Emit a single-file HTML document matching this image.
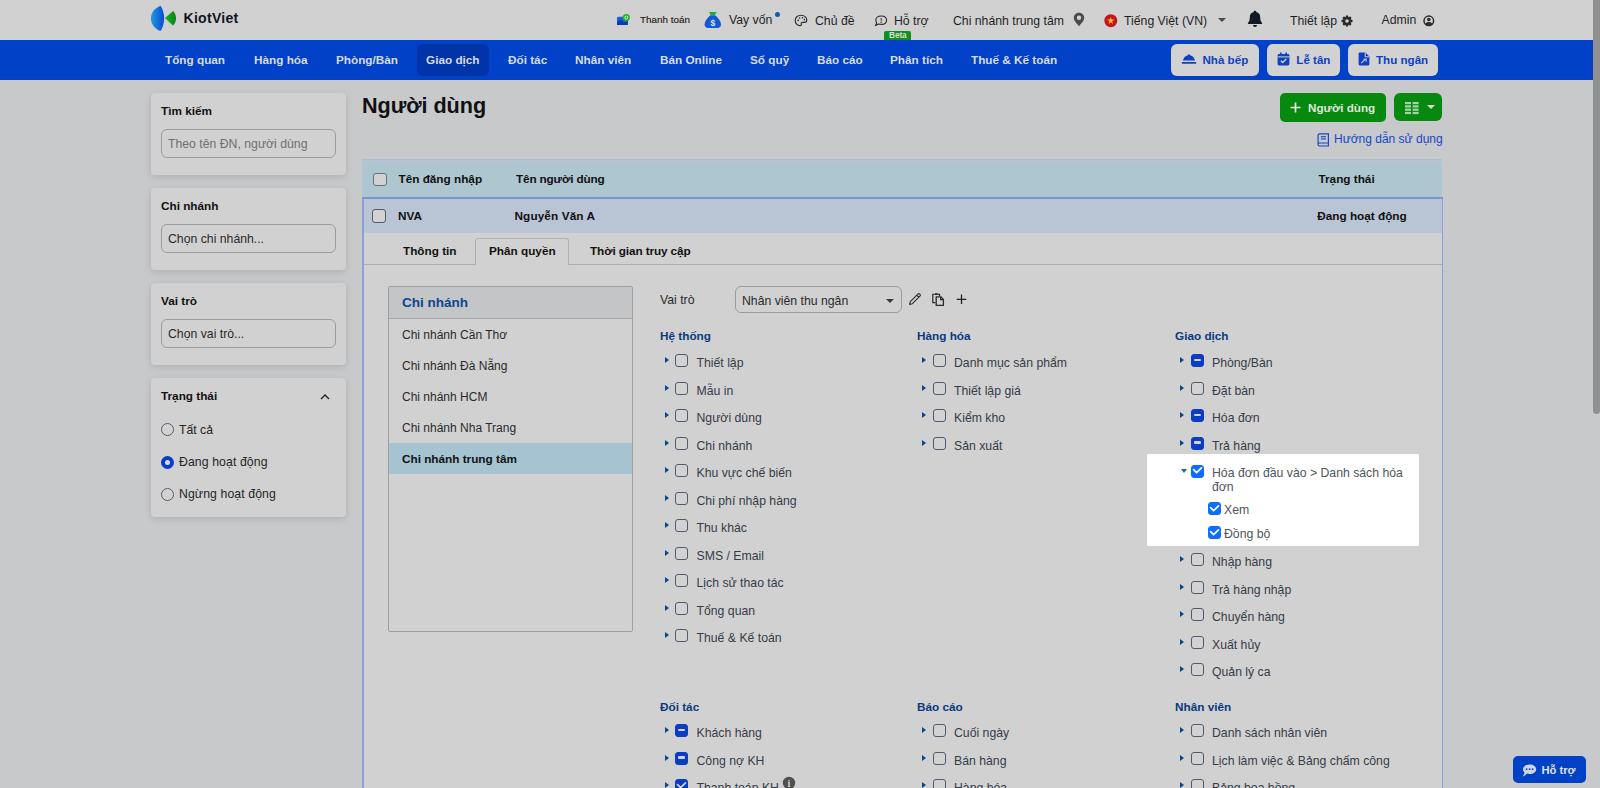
<!DOCTYPE html>
<html lang="vi">
<head>
<meta charset="utf-8">
<title>Người dùng - KiotViet</title>
<style>
*{box-sizing:border-box;margin:0;padding:0}
html,body{width:1600px;height:788px;overflow:hidden}
body{position:relative;background:#c8c9cb;font-family:"Liberation Sans",sans-serif;font-size:12.25px;color:#1c1c1c}
#page{position:absolute;left:0;top:0;width:1600px;height:788px;overflow:hidden}
#page div,#page span,#page i,#page svg,#page b{position:absolute;white-space:nowrap}
#topbar{left:0;top:0;width:1593px;height:40px;background:#d1d1d1}
#nav{left:0;top:40px;width:1593px;height:40px;background:#0041c8}
.nv{color:#d8dbe4;font-weight:bold;font-size:11.75px;top:12px;line-height:16px}
.tb{color:#1f1f1f;font-size:12.25px;top:13px;line-height:16px}
.nbtn{top:4px;height:32px;background:#d2d2d3;border-radius:6px}
.nbtn span{color:#0f3fc2;font-size:11.6px;font-weight:bold;top:8px;line-height:16px}
.card{left:151px;width:195px;background:#d1d1d1;border-radius:4px;box-shadow:0 2px 7px rgba(0,0,0,.13)}
.card .h{left:10px;top:10px;font-weight:bold;font-size:11.75px;line-height:16px;color:#111}
.card .in{left:10px;top:36px;width:175px;height:29px;border:1px solid #9c9c9c;border-radius:6px;background:#d1d1d1}
.card .in span{left:6px;top:6px;font-size:12.25px;line-height:16px;color:#2a2a2a}
.rad{width:13.4px;height:13.4px;border:1.25px solid #565d6b;border-radius:50%;background:#d2d2d2}
.rl{font-size:12.25px;line-height:16px;color:#262626}
.sec{font-weight:bold;font-size:11.75px;line-height:16px;color:#0a3a80}
.row{height:16px;width:250px}
.row .ar{left:4.5px;top:3.3px;width:0;height:0;border-left:4.5px solid #0a4688;border-top:3.7px solid transparent;border-bottom:3.7px solid transparent}
.row .cb,.cbx{left:16px;top:.3px;width:13px;height:13.2px;border:1.3px solid #4f5a6e;border-radius:3px;background:#d2d2d2}
.row .cb.on,.row .cb.chk{background:#0a3cc4;border-color:#0a3cc4}
.row .cb.on:after{content:"";position:absolute;left:1.7px;top:3.7px;width:7px;height:2.2px;background:#d2d2d2;border-radius:1px}
.row span{left:37px;top:1px;font-size:12.25px;line-height:16px;color:#353c48}
.th{font-weight:bold;font-size:11.75px;line-height:16px;color:#111}
.bi{left:13px;font-size:12px;line-height:16px;color:#2a2a2a}
.ck{background:#0d6efd !important;border-color:#0d6efd !important}
</style>
</head>
<body>
<div id="page">
<div id="topbar">
<svg style="left:150px;top:5px" width="28" height="27" viewBox="0 0 28 27"><defs><linearGradient id="lg" x1="0" x2="1" y1="0" y2="0"><stop offset="0" stop-color="#1f9fd6"/><stop offset="1" stop-color="#0a48d6"/></linearGradient><linearGradient id="gg" x1="0" x2="1" y1="0" y2="0"><stop offset="0" stop-color="#1bb224"/><stop offset="1" stop-color="#0a8613"/></linearGradient></defs><path d="M10.7 0.8 C4.5 3 0.9 8 0.9 13.4 C0.9 18.8 4.5 23.8 10.7 26 C13 22 14.1 17.8 14.1 13.4 C14.1 9 13 4.8 10.7 0.8Z" fill="url(#lg)"/><path d="M14.9 13.1 L23.2 5.9 C25.2 8 26 10.5 26 13.3 C26 16 25.2 18.5 22.9 20.6 Z" fill="url(#gg)"/></svg>
<span style="left:183.5px;top:9px;font-size:14px;line-height:18px;font-weight:bold;color:#111622;letter-spacing:0.3px">KiotViet</span>
<svg style="left:616px;top:12px" width="15" height="14" viewBox="0 0 15 14"><rect x="1" y="4.8" width="10.8" height="8.2" rx="1.2" fill="#1a60dc"/><path d="M1 10 L5 7.5 L8 10.5 L11.8 9 L11.8 13 L1 13Z" fill="#0a3cb0"/><circle cx="10.3" cy="5.6" r="3.6" fill="#22b02a"/><circle cx="10.3" cy="5.6" r="1.5" fill="none" stroke="#d8f0d8" stroke-width="1"/></svg>
<span class="tb" style="left:640px;font-size:9.9px;top:12px;color:#1f1212;-webkit-text-stroke:.12px #2a1616">Thanh toán</span>
<svg style="left:704px;top:11px" width="18" height="18" viewBox="0 0 18 18"><path d="M5 1 L12.6 1 L11 4 L6.6 4Z" fill="#1fae27"/><path d="M6.4 4.3 L11.2 4.3 C14.5 7 17 10.5 17 13.6 C17 16 15.6 17 13.4 17 L4.2 17 C2 17 0.6 16 0.6 13.6 C0.6 10.5 3.1 7 6.4 4.3Z" fill="#1257d6"/><text x="8.8" y="14.6" font-size="8.5" font-weight="bold" fill="#dfe6f5" text-anchor="middle" font-family="Liberation Sans, sans-serif">$</text></svg>
<span class="tb" style="left:729px;top:12px">Vay vốn</span>
<i style="left:775px;top:11.7px;width:5px;height:5px;border-radius:50%;background:#0b5cb5"></i>
<svg style="left:794px;top:14px" width="14" height="13" viewBox="0 0 14 13"><path d="M7 1.2 C3.6 1.2 1.2 3.6 1.2 6.5 C1.2 9.4 3.4 11.6 6 11.6 C7.3 11.6 7.6 10.8 7.3 10 C7 9.1 7.5 8.3 8.6 8.3 L10.4 8.3 C11.9 8.3 12.8 7.4 12.8 6 C12.8 3.3 10.3 1.2 7 1.2Z" fill="none" stroke="#2b2b2b" stroke-width="1.15"/><circle cx="4.2" cy="6.4" r=".8" fill="#2b2b2b"/><circle cx="5.6" cy="4" r=".8" fill="#2b2b2b"/><circle cx="8.4" cy="3.8" r=".8" fill="#2b2b2b"/><circle cx="10.4" cy="5.6" r=".8" fill="#2b2b2b"/></svg>
<span class="tb" style="left:815px">Chủ đề</span>
<svg style="left:874px;top:15px" width="14" height="12" viewBox="0 0 14 12"><path d="M7.2 1 C10.4 1 12.6 2.8 12.6 5.2 C12.6 7.6 10.4 9.4 7.2 9.4 C6.3 9.4 5.5 9.3 4.8 9 L1.4 10.6 L2.7 7.9 C2.1 7.1 1.8 6.2 1.8 5.2 C1.8 2.8 4 1 7.2 1Z" fill="none" stroke="#2b2b2b" stroke-width="1.1" stroke-linejoin="round"/><text x="7.25" y="8" font-size="7" font-weight="bold" fill="#2b2b2b" text-anchor="middle" font-family="Liberation Sans, sans-serif">!</text></svg>
<span class="tb" style="left:894px">Hỗ trợ</span>
<div style="left:884px;top:31px;width:27px;height:9px;background:#10901a;border-radius:2px 2px 0 0"><span style="left:5px;top:0;font-size:8.3px;line-height:9px;font-weight:bold;color:#dcdcdc;letter-spacing:-0.1px">Beta</span></div>
<span class="tb" style="left:953px">Chi nhánh trung tâm</span>
<svg style="left:1073px;top:12px" width="12" height="15" viewBox="0 0 12 15"><path d="M6 .7 C3 .7 .8 2.9 .8 5.8 C.8 9 4 12 6 14.2 C8 12 11.2 9 11.2 5.8 C11.2 2.9 9 .7 6 .7Z M6 3.6 A2.2 2.2 0 1 1 6 8 A2.2 2.2 0 1 1 6 3.6Z" fill="#4b4b4b" fill-rule="evenodd"/></svg>
<svg style="left:1104px;top:14px" width="14" height="14" viewBox="0 0 14 14"><circle cx="6.8" cy="6.7" r="6.5" fill="#c4161c"/><path d="M6.8 3 L7.7 5.6 L10.4 5.6 L8.2 7.2 L9 9.9 L6.8 8.3 L4.6 9.9 L5.4 7.2 L3.2 5.6 L5.9 5.6Z" fill="#e6c11e"/></svg>
<span class="tb" style="left:1124px">Tiếng Việt (VN)</span>
<i style="left:1217.5px;top:17.8px;border-top:4.4px solid #4a4a4a;border-left:4.2px solid transparent;border-right:4.2px solid transparent"></i>
<svg style="left:1247px;top:10px" width="16" height="18" viewBox="0 0 16 18"><path d="M8 .8 C8.8 .8 9.3 1.3 9.3 2 C11.8 2.6 13.2 4.6 13.2 7.2 C13.2 10 13.8 11.6 15 12.8 C15.4 13.3 15.1 14 14.4 14 L1.6 14 C.9 14 .6 13.3 1 12.8 C2.2 11.6 2.8 10 2.8 7.2 C2.8 4.6 4.2 2.6 6.7 2 C6.7 1.3 7.2 .8 8 .8Z" fill="#111a22"/><path d="M6 15 L10 15 C10 16.2 9.1 17 8 17 C6.9 17 6 16.2 6 15Z" fill="#111a22"/></svg>
<span class="tb" style="left:1290px">Thiết lập</span>
<svg style="left:1341px;top:15px" width="12" height="12" viewBox="0 0 12 12"><g fill="#2b2b2b"><circle cx="6" cy="6" r="4.2"/><rect x="4.8" y="0.6" width="2.4" height="10.8" rx=".4"/><rect x="4.8" y="0.6" width="2.4" height="10.8" rx=".4" transform="rotate(45 6 6)"/><rect x="4.8" y="0.6" width="2.4" height="10.8" rx=".4" transform="rotate(90 6 6)"/><rect x="4.8" y="0.6" width="2.4" height="10.8" rx=".4" transform="rotate(135 6 6)"/></g><circle cx="6" cy="6" r="1.8" fill="#d1d1d1"/></svg>
<span class="tb" style="left:1381.5px;top:12px">Admin</span>
<svg style="left:1423px;top:14.5px" width="12" height="12" viewBox="0 0 12 12"><circle cx="5.8" cy="5.8" r="4.8" fill="#d1d1d1" stroke="#2b2b2b" stroke-width="1.5"/><circle cx="5.8" cy="4.5" r="1.8" fill="#2b2b2b"/><path d="M2.3 8.9 C3 7.4 4.3 6.9 5.8 6.9 C7.3 6.9 8.6 7.4 9.3 8.9 C8.4 10 7.2 10.6 5.8 10.6 C4.4 10.6 3.2 10 2.3 8.9Z" fill="#2b2b2b"/></svg>
</div>
<div id="nav">
<div style="left:417px;top:4px;width:72px;height:32px;border-radius:6px;background:#0034a8"></div>
<span class="nv" style="left:165px">Tổng quan</span>
<span class="nv" style="left:254px">Hàng hóa</span>
<span class="nv" style="left:336px">Phòng/Bàn</span>
<span class="nv" style="left:426px">Giao dịch</span>
<span class="nv" style="left:508px">Đối tác</span>
<span class="nv" style="left:575px">Nhân viên</span>
<span class="nv" style="left:660px">Bán Online</span>
<span class="nv" style="left:750px">Sổ quỹ</span>
<span class="nv" style="left:817px">Báo cáo</span>
<span class="nv" style="left:890px">Phân tích</span>
<span class="nv" style="left:971px">Thuế &amp; Kế toán</span>
<div class="nbtn" style="left:1171px;width:88px"><svg style="left:10px;top:9px" width="16" height="12" viewBox="0 0 16 12"><path d="M8 1.2 C8.6 1.2 9 1.6 9 2.2 C11.8 2.7 13.6 4.8 14 7.6 L2 7.6 C2.4 4.8 4.2 2.7 7 2.2 C7 1.6 7.4 1.2 8 1.2Z" fill="#0f3fc2"/><rect x="0.8" y="9" width="14.4" height="1.8" rx=".5" fill="#0f3fc2"/></svg><span style="left:31.5px">Nhà bếp</span></div>
<div class="nbtn" style="left:1267px;width:73px"><svg style="left:10px;top:8px" width="13" height="14" viewBox="0 0 13 14"><path d="M3 .6 L4.6 .6 L4.6 2 L8.4 2 L8.4 .6 L10 .6 L10 2 L11 2 C11.8 2 12.4 2.6 12.4 3.4 L12.4 12 C12.4 12.8 11.8 13.4 11 13.4 L2 13.4 C1.2 13.4 .6 12.8 .6 12 L.6 3.4 C.6 2.6 1.2 2 2 2 L3 2Z" fill="#0f3fc2"/><rect x=".6" y="4.4" width="11.8" height="1" fill="#d2d2d3"/><path d="M3.8 8.8 L5.7 10.6 L9.3 7" fill="none" stroke="#d2d2d3" stroke-width="1.4"/></svg><span style="left:29.3px">Lễ tân</span></div>
<div class="nbtn" style="left:1348px;width:90px"><svg style="left:10px;top:8px" width="12" height="14" viewBox="0 0 12 14"><path d="M1.8 .6 L7.4 .6 L11.4 4.6 L11.4 12.2 C11.4 12.9 10.9 13.4 10.2 13.4 L1.8 13.4 C1.1 13.4 .6 12.9 .6 12.2 L.6 1.8 C.6 1.1 1.1 .6 1.8 .6Z" fill="#0f3fc2"/><path d="M7.2 .8 L7.2 4.8 L11.2 4.8" fill="none" stroke="#d2d2d3" stroke-width="1"/><path d="M3.2 11.2 L6.8 7.6 M5.6 7.2 L8.2 7 L8 9.6" fill="none" stroke="#d2d2d3" stroke-width="1.1"/></svg><span style="left:28px">Thu ngân</span></div>
</div>
<div class="card" style="top:93px;height:82px"><span class="h">Tìm kiếm</span><div class="in"><span style="color:#6f6f6f">Theo tên ĐN, người dùng</span></div></div>
<div class="card" style="top:188px;height:82px"><span class="h">Chi nhánh</span><div class="in"><span>Chọn chi nhánh...</span></div></div>
<div class="card" style="top:283px;height:82px"><span class="h">Vai trò</span><div class="in"><span>Chọn vai trò...</span></div></div>
<div class="card" style="top:378px;height:139px"><span class="h">Trạng thái</span>
<svg style="left:169px;top:15px" width="10" height="8" viewBox="0 0 10 8"><path d="M1 6 L5 2 L9 6" fill="none" stroke="#222" stroke-width="1.4"/></svg>
<i class="rad" style="left:10px;top:45px"></i><span class="rl" style="left:28px;top:43.5px">Tất cả</span>
<i class="rad" style="left:10px;top:77.5px;border:4px solid #0a3cc6;background:#dcdcdc"></i><span class="rl" style="left:28px;top:76px;letter-spacing:.1px">Đang hoạt động</span>
<i class="rad" style="left:10px;top:110px"></i><span class="rl" style="left:28px;top:108px;letter-spacing:.1px">Ngừng hoạt động</span>
</div>
<span style="left:362px;top:92px;font-size:21.6px;line-height:28px;font-weight:bold;color:#111;letter-spacing:-0.05px">Người dùng</span>
<div style="left:1280px;top:92.5px;width:106px;height:29px;border-radius:5px;background:#07880f"><svg style="left:10px;top:9px" width="11" height="11" viewBox="0 0 11 11"><path d="M5.5 .4 L5.5 10.6 M.4 5.5 L10.6 5.5" stroke="#e4ece4" stroke-width="1.7"/></svg><span style="left:28px;top:7px;font-size:11.65px;line-height:16px;font-weight:bold;color:#dfe6df">Người dùng</span></div>
<div style="left:1394px;top:92.5px;width:48px;height:28.5px;border-radius:6px;background:#07880f"><svg style="left:11px;top:9px" width="14" height="13" viewBox="0 0 14 13"><g fill="#a8d2aa"><rect x="0" y="0" width="6" height="2.2"/><rect x="7.6" y="0" width="6" height="2.2"/><rect x="0" y="3.3" width="6" height="2.2"/><rect x="7.6" y="3.3" width="6" height="2.2"/><rect x="0" y="6.6" width="6" height="2.2"/><rect x="7.6" y="6.6" width="6" height="2.2"/><rect x="0" y="9.9" width="6" height="2.2"/><rect x="7.6" y="9.9" width="6" height="2.2"/></g></svg><i style="left:33px;top:12.5px;border-top:4.5px solid #cfe3cf;border-left:4.5px solid transparent;border-right:4.5px solid transparent"></i></div>
<svg style="left:1317px;top:132.5px" width="13" height="14" viewBox="0 0 13 14"><path d="M2.6 .8 L11.4 .8 L11.4 13 L2.6 13 C1.7 13 1.1 12.4 1.1 11.5 L1.1 2.3 C1.1 1.4 1.7 .8 2.6 .8Z M1.1 11.3 C1.1 10.5 1.7 10 2.6 10 L11.4 10" fill="none" stroke="#1546c8" stroke-width="1.2"/><rect x="3.8" y="3.2" width="5.2" height="1.1" fill="#1546c8"/><rect x="3.8" y="5.4" width="5.2" height="1.1" fill="#1546c8"/></svg>
<span style="left:1334px;top:131px;font-size:12px;line-height:16px;color:#1546c8">Hướng dẫn sử dụng</span>
<div style="left:362px;top:159px;width:1080px;height:38px;background:#aec6cf;border-top:1px solid #a6c1cc"><div style="left:0;top:0;width:1080px;height:3px;background:#b5c3d2"></div></div>
<i class="cbx" style="left:373px;top:172.5px;width:13.5px;height:13.5px;background:#d2d2d2;border-color:#66727f"></i>
<span class="th" style="left:398.5px;top:171px">Tên đăng nhập</span>
<span class="th" style="left:516px;top:171px;letter-spacing:-0.15px">Tên người dùng</span>
<span class="th" style="left:1318.5px;top:171px">Trạng thái</span>
<div style="left:362px;top:197px;width:1081px;height:620px;background:#d1d1d1"></div>
<div style="left:363px;top:198px;width:1079px;height:35px;background:#b9c4d4"></div>
<div style="left:362.4px;top:197px;width:1.2px;height:620px;background:#8f9edc"></div>
<div style="left:1441.5px;top:197px;width:1.2px;height:620px;background:#8f9edc"></div>
<div style="left:362.4px;top:197.2px;width:1080.3px;height:1.6px;background:#7895da"></div>
<i class="cbx" style="left:372.4px;top:209px;width:13.5px;height:13.6px;background:#d2d2d2"></i>
<span class="th" style="left:398px;top:208px">NVA</span>
<span class="th" style="left:514.5px;top:208px;letter-spacing:.12px">Nguyễn Văn A</span>
<span class="th" style="left:1317.3px;top:208px">Đang hoạt động</span>
<div style="left:363px;top:264px;width:1079px;height:1px;background:#aeaeae"></div>
<div style="left:475px;top:238px;width:94px;height:27px;background:#d1d1d1;border:1px solid #b0b0b0;border-bottom:none;border-radius:3px 3px 0 0"></div>
<span class="th" style="left:403px;top:243px">Thông tin</span>
<span class="th" style="left:489px;top:243px">Phân quyền</span>
<span class="th" style="left:590px;top:243px;letter-spacing:-0.1px">Thời gian truy cập</span>
<div style="left:388px;top:286px;width:245px;height:346px;border:1px solid #9f9f9f;border-radius:2px;background:#d1d1d1">
<div style="left:0;top:0;width:243px;height:32px;background:#c4c5c7;border-bottom:1px solid #a8a8a8"><span style="left:13px;top:7px;font-size:13.5px;line-height:18px;font-weight:bold;color:#0a4590">Chi nhánh</span></div>
<div style="left:0;top:156px;width:243px;height:31px;background:#a5c3d0"></div>
<span class="bi" style="top:40px">Chi nhánh Cần Thơ</span>
<span class="bi" style="top:71px">Chi nhánh Đà Nẵng</span>
<span class="bi" style="top:102px">Chi nhánh HCM</span>
<span class="bi" style="top:133px">Chi nhánh Nha Trang</span>
<span class="bi" style="top:164px;font-weight:bold;font-size:11.75px;color:#111">Chi nhánh trung tâm</span>
</div>
<span style="left:660px;top:292px;font-size:12.25px;line-height:16px;color:#2a2a2a">Vai trò</span>
<div style="left:735px;top:286px;width:167px;height:27px;border:1px solid #9c9c9c;border-radius:6px"><span style="left:6px;top:6px;font-size:12.25px;line-height:16px;color:#2a2a2a">Nhân viên thu ngân</span><i style="left:149.5px;top:12.3px;border-top:4.4px solid #3a3a3a;border-left:4px solid transparent;border-right:4px solid transparent"></i></div>
<svg style="left:908px;top:292px" width="14" height="14" viewBox="0 0 14 14"><path d="M1.6 12.4 L2.3 9.6 L9.8 2.1 C10.4 1.5 11.3 1.5 11.9 2.1 C12.5 2.7 12.5 3.6 11.9 4.2 L4.4 11.7 Z M8.7 3.2 L10.8 5.3" fill="none" stroke="#2a2a2a" stroke-width="1.1" stroke-linejoin="round"/></svg>
<svg style="left:931px;top:292px" width="14" height="15" viewBox="0 0 14 15"><path d="M4.4 10.6 L1.8 10.6 L1.8 2.4 L3.6 2.4 M7 2.4 L8.6 2.4 L8.6 4" fill="none" stroke="#2a2a2a" stroke-width="1.2"/><rect x="3.8" y="1.2" width="3" height="1.8" fill="#2a2a2a"/><path d="M5.2 4.8 L9.8 4.8 L12.4 7.4 L12.4 13.4 L5.2 13.4Z" fill="#d1d1d1" stroke="#2a2a2a" stroke-width="1.3" stroke-linejoin="round"/><path d="M9.6 5 L9.6 7.6 L12.2 7.6" fill="none" stroke="#2a2a2a" stroke-width="1.1"/></svg>
<svg style="left:956px;top:294px" width="11" height="11" viewBox="0 0 11 11"><path d="M5.5 .5 L5.5 10 M.7 5.3 L10.3 5.3" stroke="#222" stroke-width="1.3"/></svg>
<div style="left:1146.7px;top:454.4px;width:272.4px;height:91.6px;border-radius:1px;background:#fff"></div>
<span class="sec" style="left:660px;top:328px">Hệ thống</span>
<div class="row" style="left:660px;top:354px"><i class="ar"></i><i class="cb" style="left:15px"></i><span style="left:36.5px">Thiết lập</span></div>
<div class="row" style="left:660px;top:381.5px"><i class="ar"></i><i class="cb" style="left:15px"></i><span style="left:36.5px">Mẫu in</span></div>
<div class="row" style="left:660px;top:409px"><i class="ar"></i><i class="cb" style="left:15px"></i><span style="left:36.5px">Người dùng</span></div>
<div class="row" style="left:660px;top:436.5px"><i class="ar"></i><i class="cb" style="left:15px"></i><span style="left:36.5px">Chi nhánh</span></div>
<div class="row" style="left:660px;top:464px"><i class="ar"></i><i class="cb" style="left:15px"></i><span style="left:36.5px">Khu vực chế biến</span></div>
<div class="row" style="left:660px;top:491.5px"><i class="ar"></i><i class="cb" style="left:15px"></i><span style="left:36.5px">Chi phí nhập hàng</span></div>
<div class="row" style="left:660px;top:519px"><i class="ar"></i><i class="cb" style="left:15px"></i><span style="left:36.5px">Thu khác</span></div>
<div class="row" style="left:660px;top:546.5px"><i class="ar"></i><i class="cb" style="left:15px"></i><span style="left:36.5px">SMS / Email</span></div>
<div class="row" style="left:660px;top:574px"><i class="ar"></i><i class="cb" style="left:15px"></i><span style="left:36.5px">Lịch sử thao tác</span></div>
<div class="row" style="left:660px;top:601.5px"><i class="ar"></i><i class="cb" style="left:15px"></i><span style="left:36.5px">Tổng quan</span></div>
<div class="row" style="left:660px;top:629px"><i class="ar"></i><i class="cb" style="left:15px"></i><span style="left:36.5px">Thuế &amp; Kế toán</span></div>
<span class="sec" style="left:917px;top:328px">Hàng hóa</span>
<div class="row" style="left:917px;top:354px"><i class="ar"></i><i class="cb" style="left:15.5px"></i><span style="left:37px">Danh mục sản phẩm</span></div>
<div class="row" style="left:917px;top:381.5px"><i class="ar"></i><i class="cb" style="left:15.5px"></i><span style="left:37px">Thiết lập giá</span></div>
<div class="row" style="left:917px;top:409px"><i class="ar"></i><i class="cb" style="left:15.5px"></i><span style="left:37px">Kiểm kho</span></div>
<div class="row" style="left:917px;top:436.5px"><i class="ar"></i><i class="cb" style="left:15.5px"></i><span style="left:37px">Sản xuất</span></div>
<span class="sec" style="left:1175px;top:328px">Giao dịch</span>
<div class="row" style="left:1175px;top:354px"><i class="ar"></i><i class="cb on" style="left:16px"></i><span style="left:37px">Phòng/Bàn</span></div>
<div class="row" style="left:1175px;top:381.5px"><i class="ar"></i><i class="cb" style="left:16px"></i><span style="left:37px">Đặt bàn</span></div>
<div class="row" style="left:1175px;top:409px"><i class="ar"></i><i class="cb on" style="left:16px"></i><span style="left:37px">Hóa đơn</span></div>
<div class="row" style="left:1175px;top:436.5px"><i class="ar"></i><i class="cb on" style="left:16px"></i><span style="left:37px">Trả hàng</span></div>
<i style="left:1180.6px;top:469.3px;border-top:4.2px solid #10709f;border-left:3.4px solid transparent;border-right:3.4px solid transparent"></i>
<i class="cbx ck" style="left:1191px;top:464.5px"><svg style="left:-1.3px;top:-1.3px" width="13" height="13" viewBox="0 0 13 13"><path d="M2.6 5.6 L5.6 8.7 L10.5 3.9" fill="none" stroke="#fff" stroke-width="1.7" stroke-linecap="round" stroke-linejoin="round"/></svg></i>
<span style="left:1212px;top:466px;white-space:normal;width:200px;font-size:12.25px;line-height:14.3px;color:#50555c">Hóa đơn đầu vào &gt; Danh sách hóa đơn</span>
<i class="cbx ck" style="left:1208px;top:502px"><svg style="left:-1.3px;top:-1.3px" width="13" height="13" viewBox="0 0 13 13"><path d="M2.6 5.6 L5.6 8.7 L10.5 3.9" fill="none" stroke="#fff" stroke-width="1.7" stroke-linecap="round" stroke-linejoin="round"/></svg></i><span style="left:1224px;top:502px;font-size:12.25px;line-height:16px;color:#50555c">Xem</span>
<i class="cbx ck" style="left:1208px;top:526px"><svg style="left:-1.3px;top:-1.3px" width="13" height="13" viewBox="0 0 13 13"><path d="M2.6 5.6 L5.6 8.7 L10.5 3.9" fill="none" stroke="#fff" stroke-width="1.7" stroke-linecap="round" stroke-linejoin="round"/></svg></i><span style="left:1224px;top:526px;font-size:12.25px;line-height:16px;color:#50555c">Đồng bộ</span>
<div class="row" style="left:1175px;top:553px"><i class="ar"></i><i class="cb" style="left:16px"></i><span style="left:37px">Nhập hàng</span></div>
<div class="row" style="left:1175px;top:580.5px"><i class="ar"></i><i class="cb" style="left:16px"></i><span style="left:37px">Trả hàng nhập</span></div>
<div class="row" style="left:1175px;top:608px"><i class="ar"></i><i class="cb" style="left:16px"></i><span style="left:37px">Chuyển hàng</span></div>
<div class="row" style="left:1175px;top:635.5px"><i class="ar"></i><i class="cb" style="left:16px"></i><span style="left:37px">Xuất hủy</span></div>
<div class="row" style="left:1175px;top:663px"><i class="ar"></i><i class="cb" style="left:16px"></i><span style="left:37px">Quản lý ca</span></div>
<span class="sec" style="left:660px;top:699px">Đối tác</span>
<div class="row" style="left:660px;top:724px"><i class="ar"></i><i class="cb on" style="left:15px"></i><span style="left:36.5px">Khách hàng</span></div>
<div class="row" style="left:660px;top:751.5px"><i class="ar"></i><i class="cb on" style="left:15px"></i><span style="left:36.5px">Công nợ KH</span></div>
<div class="row" style="left:660px;top:779px"><i class="ar"></i><i class="cb chk" style="left:15px"><svg style="left:-1.3px;top:-1.3px" width="13" height="13" viewBox="0 0 13 13"><path d="M2.6 5.6 L5.6 8.7 L10.5 3.9" fill="none" stroke="#d6d6d6" stroke-width="1.7" stroke-linecap="round" stroke-linejoin="round"/></svg></i><span style="left:36.5px">Thanh toán KH</span><svg style="left:121.8px;top:-3.5px" width="14" height="14" viewBox="0 0 14 14"><circle cx="7" cy="7" r="6.2" fill="#505050"/><text x="7" y="11" font-size="10.5" font-weight="bold" fill="#d1d1d1" text-anchor="middle" font-family="Liberation Serif, serif">i</text></svg></div>
<span class="sec" style="left:917px;top:699px">Báo cáo</span>
<div class="row" style="left:917px;top:724px"><i class="ar"></i><i class="cb" style="left:15.5px"></i><span style="left:37px">Cuối ngày</span></div>
<div class="row" style="left:917px;top:751.5px"><i class="ar"></i><i class="cb" style="left:15.5px"></i><span style="left:37px">Bán hàng</span></div>
<div class="row" style="left:917px;top:779px"><i class="ar"></i><i class="cb" style="left:15.5px"></i><span style="left:37px">Hàng hóa</span></div>
<span class="sec" style="left:1175px;top:699px">Nhân viên</span>
<div class="row" style="left:1175px;top:724px"><i class="ar"></i><i class="cb" style="left:16px"></i><span style="left:37px">Danh sách nhân viên</span></div>
<div class="row" style="left:1175px;top:751.5px"><i class="ar"></i><i class="cb" style="left:16px"></i><span style="left:37px">Lịch làm việc &amp; Bảng chấm công</span></div>
<div class="row" style="left:1175px;top:779px"><i class="ar"></i><i class="cb" style="left:16px"></i><span style="left:37px">Bảng hoa hồng</span></div>
<div style="left:1513px;top:756px;width:73px;height:27px;border-radius:5px;background:#0041c6"><svg style="left:9px;top:7.5px" width="15" height="13" viewBox="0 0 15 13"><path d="M7.6 .4 C11.4 .4 14.2 2.5 14.2 5.2 C14.2 7.9 11.4 10 7.6 10 C6.6 10 5.7 9.9 4.9 9.6 C4 10.6 2.4 12.2 .6 12.4 C1.6 11.2 2.4 9.8 2.5 8.3 C1.6 7.5 1 6.4 1 5.2 C1 2.5 3.8 .4 7.6 .4Z" fill="#d3d6e0"/><circle cx="4.6" cy="5.2" r=".9" fill="#0041c6"/><circle cx="7.6" cy="5.2" r=".9" fill="#0041c6"/><circle cx="10.6" cy="5.2" r=".9" fill="#0041c6"/></svg><span style="left:28.5px;top:5.5px;font-size:11.2px;line-height:16px;font-weight:bold;color:#dfe3ee">Hỗ trợ</span></div>
<div style="left:1593px;top:0;width:7px;height:414px;background:#909090;border-radius:0 0 4px 4px"></div>
</div>
</body>
</html>
